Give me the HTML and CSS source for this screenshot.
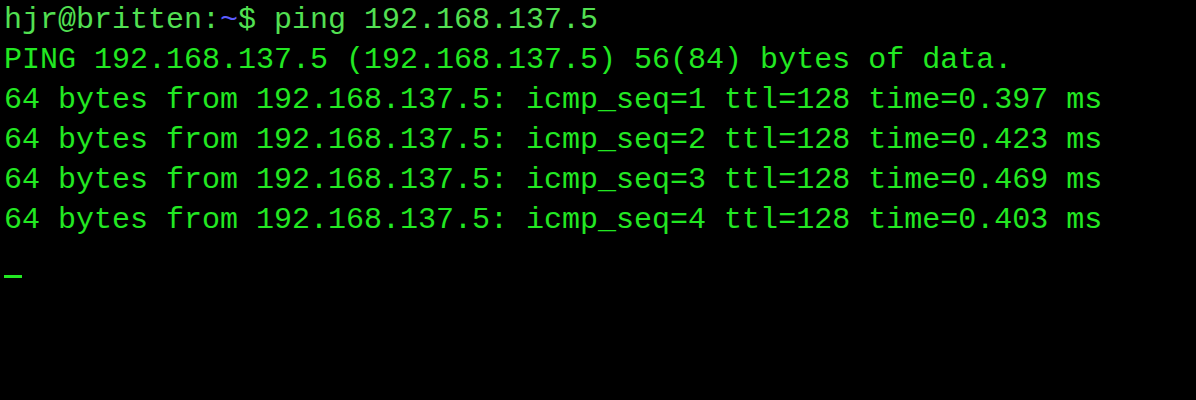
FILE: index.html
```html
<!DOCTYPE html>
<html>
<head>
<meta charset="utf-8">
<link rel="stylesheet" href="styles.css">
</head>
<body>
<div class="term">
<div class="line prompt">hjr@britten:<span class="path">~</span>$ ping 192.168.137.5</div>
<div class="line">PING 192.168.137.5 (192.168.137.5) 56(84) bytes of data.</div>
<div class="line">64 bytes from 192.168.137.5: icmp_seq=1 ttl=128 time=0.397 ms</div>
<div class="line">64 bytes from 192.168.137.5: icmp_seq=2 ttl=128 time=0.423 ms</div>
<div class="line">64 bytes from 192.168.137.5: icmp_seq=3 ttl=128 time=0.469 ms</div>
<div class="line">64 bytes from 192.168.137.5: icmp_seq=4 ttl=128 time=0.403 ms</div>
<div class="line cursor-line"><span class="cursor"></span></div>
</div>
</body>
</html>
```

FILE: styles.css
```css
html, body {
  margin: 0;
  padding: 0;
  background: #000;
  height: 100%;
}
.term {
  padding: 0 0 0 4px;
  font-family: "Liberation Mono", monospace;
  font-size: 30px;
  line-height: 40px;
  color: #22e822;
}
.line {
  height: 40px;
  white-space: pre;
}
.prompt {
  color: #52e052;
}
.path {
  color: #5c5cff;
}
.cursor-line {
  display: flex;
  align-items: flex-end;
}
.cursor {
  display: block;
  width: 18px;
  height: 3px;
  margin-bottom: 2px;
  background: #22e822;
}
```
